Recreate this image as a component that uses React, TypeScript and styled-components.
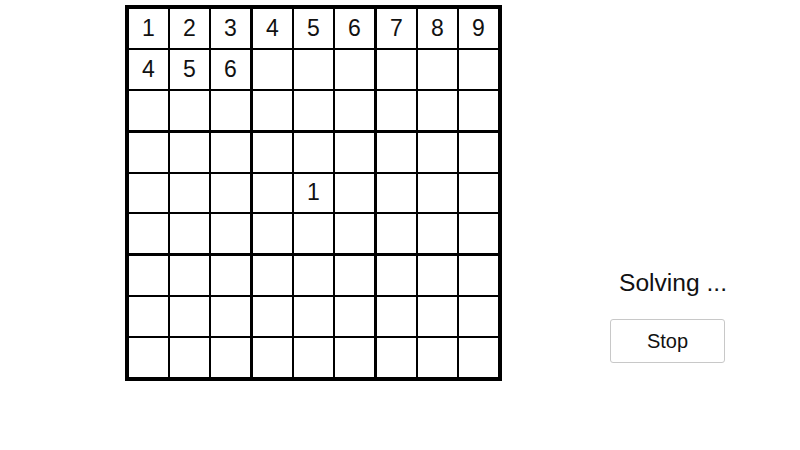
import styled, { createGlobalStyle } from 'styled-components';

const GlobalStyle = createGlobalStyle`
  html, body {
    margin: 0;
    padding: 0;
    background: #ffffff;
    font-family: "Liberation Sans", Arial, sans-serif;
  }
`;

const Page = styled.div`
  display: flex;
  align-items: flex-start;
  width: 800px;
  height: 450px;
  padding: 5px 0 0 125px;
  box-sizing: border-box;
`;

const Board = styled.div`
  display: grid;
  grid-template-columns: repeat(3, 1fr);
  grid-template-rows: repeat(3, 1fr);
  gap: 3px;
  width: 377px;
  height: 376px;
  padding: 4px;
  box-sizing: border-box;
  background: #000000;
`;

const Box = styled.div`
  display: grid;
  grid-template-columns: repeat(3, 1fr);
  grid-template-rows: repeat(3, 1fr);
  gap: 2px;
`;

const Cell = styled.div`
  display: flex;
  align-items: center;
  justify-content: center;
  background: #ffffff;
  font-size: 23px;
  color: #111111;
`;

const SidePanel = styled.div`
  display: flex;
  flex-direction: column;
  align-items: flex-start;
  margin-left: 108px;
  padding-top: 264px;
`;

const Status = styled.div`
  margin-left: 9px;
  font-size: 24.6px;
  line-height: 28px;
  color: #111111;
`;

const StopButton = styled.button`
  margin-top: 22px;
  width: 115px;
  height: 44px;
  background: #ffffff;
  border: 1px solid #c8c8c8;
  border-radius: 3px;
  font-family: "Liberation Sans", Arial, sans-serif;
  font-size: 20px;
  color: #111111;
  cursor: pointer;
`;

// values[row][col], 0 = empty
const values: number[][] = [
  [1, 2, 3, 4, 5, 6, 7, 8, 9],
  [4, 5, 6, 0, 0, 0, 0, 0, 0],
  [0, 0, 0, 0, 0, 0, 0, 0, 0],
  [0, 0, 0, 0, 0, 0, 0, 0, 0],
  [0, 0, 0, 0, 1, 0, 0, 0, 0],
  [0, 0, 0, 0, 0, 0, 0, 0, 0],
  [0, 0, 0, 0, 0, 0, 0, 0, 0],
  [0, 0, 0, 0, 0, 0, 0, 0, 0],
  [0, 0, 0, 0, 0, 0, 0, 0, 0],
];

export default function App() {
  const boxes = Array.from({ length: 9 }, (_, b) => {
    const br = Math.floor(b / 3) * 3;
    const bc = (b % 3) * 3;
    return Array.from({ length: 9 }, (_, c) => values[br + Math.floor(c / 3)][bc + (c % 3)]);
  });

  return (
    <>
      <GlobalStyle />
      <Page>
        <Board>
          {boxes.map((cells, b) => (
            <Box key={b}>
              {cells.map((v, c) => (
                <Cell key={c}>{v || ''}</Cell>
              ))}
            </Box>
          ))}
        </Board>
        <SidePanel>
          <Status>Solving ...</Status>
          <StopButton>Stop</StopButton>
        </SidePanel>
      </Page>
    </>
  );
}
